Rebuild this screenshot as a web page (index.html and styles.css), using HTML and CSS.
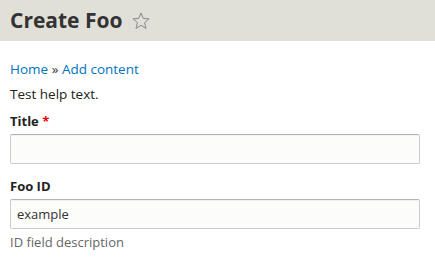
FILE: index.html
```html
<!DOCTYPE html>
<html>
<head>
<meta charset="utf-8">
<link rel="stylesheet" href="styles.css">
</head>
<body>
<header class="page-header">
  <h1 class="page-title">Create Foo</h1>
  <svg class="star" width="18" height="18" viewBox="0 0 18 18"><polygon points="9,1 11.3,6.4 17,6.8 12.6,10.6 14,16.4 9,13.3 4,16.4 5.4,10.6 1,6.8 6.7,6.4" fill="none" stroke="#8a8a85" stroke-width="1"/></svg>
</header>
<main class="content">
  <nav class="breadcrumb"><a href="#">Home</a> » <a href="#">Add content</a></nav>
  <p class="help">Test help text.</p>
  <div class="field">
    <label class="label">Title <span class="req">*</span></label>
    <input class="input" type="text" value="">
  </div>
  <div class="field">
    <label class="label">Foo ID</label>
    <input class="input" type="text" value="example">
    <div class="desc">ID field description</div>
  </div>
</main>
</body>
</html>
```
FILE: styles.css
```css
html, body { margin: 0; padding: 0; }
body {
  font-family: "Open Sans", "DejaVu Sans", sans-serif;
  color: #222;
  background: #fff;
  width: 435px;
  height: 259px;
  overflow: hidden;
}
.page-header {
  background: #e0e0d8;
  height: 41px;
  display: flex;
  align-items: center;
  padding-left: 10px;
  gap: 9px;
}
.page-title {
  margin: 0;
  font-size: 21px;
  font-weight: 700;
  color: #333;
  line-height: 1;
}
.star { display: block; margin-top: 1px; }
.content { padding: 19px 15px 0 10px; }
.breadcrumb {
  font-size: 13.5px;
  line-height: 18px;
  color: #333;
}
.breadcrumb a { color: #0074bd; text-decoration: none; }
.help {
  margin: 7px 0 0;
  font-size: 13.5px;
  line-height: 18px;
  color: #222;
}
.field { margin-top: 9px; }
.field + .field { margin-top: 13px; }
.label {
  display: block;
  font-size: 13px;
  font-weight: 700;
  line-height: 18px;
  color: #222;
  margin-bottom: 4px;
}
.req { color: #e00; font-weight: 700; }
.input {
  box-sizing: border-box;
  display: block;
  width: 410px;
  height: 30px;
  margin: 0;
  padding: 4px 6px;
  font-family: "Open Sans", "DejaVu Sans", sans-serif;
  font-size: 13px;
  color: #333;
  background: #fcfcfa;
  border: 1px solid #ccc;
  border-top-color: #b4b4b4;
  border-radius: 2px;
  box-shadow: inset 0 1px 1px rgba(0,0,0,0.05);
}
.desc {
  font-size: 13px;
  line-height: 16px;
  color: #666;
  margin-top: 5px;
}
```
